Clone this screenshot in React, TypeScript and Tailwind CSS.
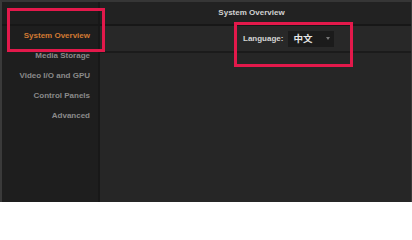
const navItems = ["System Overview", "Media Storage", "Video I/O and GPU", "Control Panels", "Advanced"];

export default function App() {
  return (
    <div
      className="relative w-[412px] h-[202px] overflow-hidden bg-[#262626] border-t-2 border-t-[#363636] border-l-2 border-l-[#3a3a3a] border-r border-r-[#3a3a3a] flex flex-col font-bold text-[8px]"
      style={{ fontFamily: '"Liberation Sans", Arial, "Noto Sans CJK SC", sans-serif' }}
    >
      {/* Title bar */}
      <div className="h-[24px] shrink-0 flex bg-[#222222] border-b-2 border-b-[#171717]">
        <div className="w-[98px] shrink-0 bg-[#1e1e1e] border-r-2 border-r-[#181818]" />
        <div className="flex-1 flex items-center justify-center text-[#d2d2d2] pr-[8px]">System Overview</div>
      </div>

      <div className="flex-1 flex min-h-0">
        {/* Sidebar */}
        <div className="w-[98px] shrink-0 bg-[#1e1e1e] border-r-2 border-r-[#181818] flex flex-col">
          {navItems.map((item, i) => (
            <div
              key={item}
              className={`h-[20px] flex items-center justify-end pr-[8px] ${i === 0 ? "text-[#d27a33]" : "text-[#8a8a8a]"}`}
            >
              {item}
            </div>
          ))}
        </div>

        {/* Main panel */}
        <div className="flex-1 flex flex-col">
          <div className="h-[27px] shrink-0 bg-[#282828] border-b-2 border-b-[#1b1b1b] flex items-center pl-[143px]">
            <span className="text-[#d4d4d4]">Language:</span>
            <div className="ml-[5px] w-[46px] h-[16px] bg-[#1b1b1b] flex items-center pl-[5px] pr-[4px] justify-between">
              <span className="text-[#e6e6e6] text-[9.5px]" style={{ fontFamily: '"Noto Sans CJK SC", sans-serif' }}>中文</span>
              <span className="w-0 h-0 border-l-[2.5px] border-r-[2.5px] border-t-[3px] border-l-transparent border-r-transparent border-t-[#777777]" />
            </div>
          </div>
          <div className="flex-1 bg-[#262626]" />
        </div>
      </div>

      {/* Annotation boxes */}
      <div className="absolute left-[5px] top-[6px] w-[98px] h-[44px] border-[3px] border-[#e3194b]" />
      <div className="absolute left-[232px] top-[20px] w-[119px] h-[45px] border-[3px] border-[#e3194b]" />
    </div>
  );
}
